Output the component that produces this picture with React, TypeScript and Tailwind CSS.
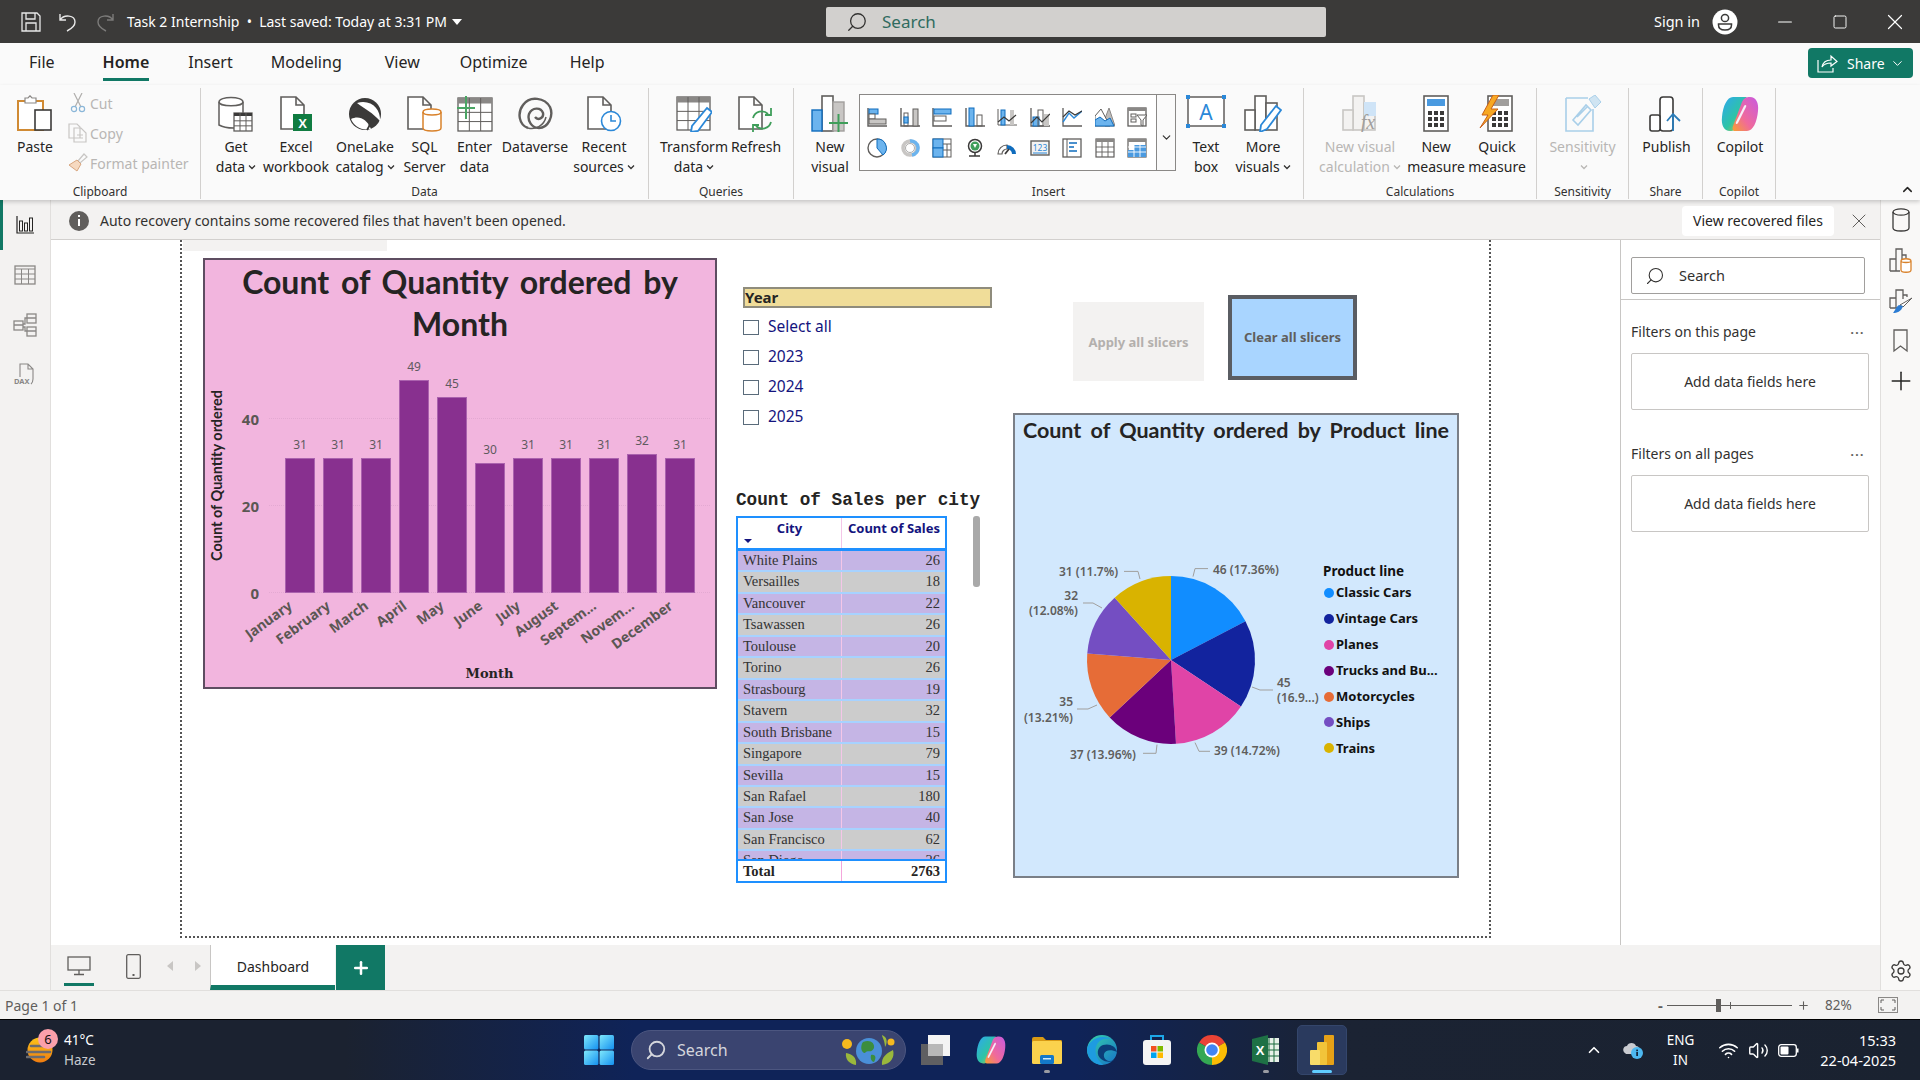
import type { ReactNode } from "react";
import { Minus, Square, X, Search, ChevronDown, ChevronUp, Settings, Plus, Wifi, Volume2 } from "lucide-react";

const GREY = "#605e5c";
const BLUE = "#6cb4ee";
const DARK_BLUE = "#0f6cbd";

function Ico({ w = 36, h = 37, children }: { w?: number; h?: number; children: ReactNode }) {
  return (
    <svg width={w} height={h} viewBox={`0 0 ${w} ${h}`} fill="none" className="shrink-0">
      {children}
    </svg>
  );
}

function Chev({ color = "#323130" }: { color?: string }) {
  return (
    <svg width="8" height="6" viewBox="0 0 8 6" fill="none" className="inline-block ml-[3px] mb-[1px]">
      <path d="M1 1.5 L4 4.5 L7 1.5" stroke={color} strokeWidth="1.3" />
    </svg>
  );
}

function Doc({ x = 0, color = GREY }: { x?: number; color?: string }) {
  return <path d={`M${x + 3} 2 H${x + 18} L${x + 26} 10 V34 H${x + 3} Z M${x + 18} 2 V10 H${x + 26}`} stroke={color} strokeWidth="1.6" fill="#fff" />;
}

function TableGrid({ x, y, w, h, head = "#8a8886", line = GREY }: { x: number; y: number; w: number; h: number; head?: string; line?: string }) {
  return (
    <g>
      <rect x={x} y={y} width={w} height={h} fill="#fff" stroke={line} strokeWidth="1.3" />
      <rect x={x} y={y} width={w} height={h / 6} fill={head} />
      <path d={`M${x + w / 3} ${y} V${y + h} M${x + (2 * w) / 3} ${y} V${y + h} M${x} ${y + h / 2.3} H${x + w} M${x} ${y + h / 1.4} H${x + w}`} stroke={line} strokeWidth="1" />
    </g>
  );
}

const PasteIcon = () => (
  <Ico w={36} h={37}>
    <rect x="1" y="6" width="25" height="29" fill="#fff" stroke="#d08a33" strokeWidth="2" />
    <path d="M8 6 V3 H11 L13 0.8 L15 3 H19 V8 H8 Z" fill="#fff" stroke="#8a8886" strokeWidth="1.2" />
    <rect x="18" y="15" width="16" height="20" fill="#fff" stroke="#3b3a39" strokeWidth="1.6" />
  </Ico>
);

const GetDataIcon = () => (
  <Ico>
    <path d="M1 7 C1 1 25 1 25 7 V30 C25 34 8 34 1 30 Z" fill="#fff" stroke={GREY} strokeWidth="1.5" />
    <path d="M1 7 C1 12 25 12 25 7" stroke={GREY} strokeWidth="1.5" />
    <TableGrid x={16} y={18} w={18} h={18} head="#3b3a39" line={GREY} />
  </Ico>
);

const ExcelIcon = () => (
  <Ico>
    <Doc />
    <rect x="15" y="19" width="19" height="17" fill="#107c41" />
    <text x="24.5" y="32.5" textAnchor="middle" fontSize="13" fontWeight="700" fill="#fff" fontFamily="Liberation Sans">X</text>
  </Ico>
);

const OneLakeIcon = () => (
  <Ico>
    <circle cx="18" cy="19" r="16" fill="#3b3a39" />
    <path d="M10 8 C24 4 34 14 33 26 C26 18 18 14 10 8 Z" fill="#fff" />
    <path d="M4 24 C12 20 20 24 24 34 C14 36 7 31 4 24 Z" fill="#fff" />
    <path d="M20 17 C24 24 24 30 20 35" stroke="#3b3a39" strokeWidth="2" />
  </Ico>
);

const SqlIcon = () => (
  <Ico>
    <Doc x={-2} />
    <path d="M16 17 C16 13 34 13 34 17 V33 C34 37 16 37 16 33 Z" fill="#fff" stroke="#d9822b" strokeWidth="1.5" />
    <path d="M16 17 C16 21 34 21 34 17" stroke="#d9822b" strokeWidth="1.5" />
  </Ico>
);

const EnterDataIcon = () => (
  <Ico>
    <TableGrid x={1} y={3} w={34} h={33} />
    <path d="M0 13 H18 M9 1 V24" stroke="#4aa564" strokeWidth="2" />
  </Ico>
);

const DataverseIcon = () => (
  <Ico>
    <path d="M11 33 C2 30 0 18 6 10 C13 0 28 3 33 12 C37 21 31 33 22 33 C15 33 10 26 12 19 C15 12 24 12 26 18 C27 23 21 26 18 22" stroke={GREY} strokeWidth="2.4" />
    <path d="M11 33 C18 35 27 31 29 22" stroke={GREY} strokeWidth="1.5" />
  </Ico>
);

const RecentIcon = () => (
  <Ico>
    <Doc x={-1} />
    <circle cx="25" cy="26" r="9.5" fill="#fff" stroke="#2b88d8" strokeWidth="1.6" />
    <path d="M25 20 V26 H30" stroke="#2b88d8" strokeWidth="1.6" />
  </Ico>
);

const TransformIcon = () => (
  <Ico>
    <TableGrid x={1} y={2} w={33} h={33} />
    <path d="M31 13 L36 17 L22 36 L15 37 L16 31 Z" fill="#fff" stroke="#2b88d8" strokeWidth="1.8" />
  </Ico>
);

const RefreshIcon = () => (
  <Ico>
    <Doc x={-2} />
    <path d="M15 24 A9 9 0 0 1 30 20 M33 14 V21 H27 M33 28 A9 9 0 0 1 18 32 M15 38 V31 H21" stroke="#3f9e5a" strokeWidth="1.8" transform="translate(0 -1)" />
  </Ico>
);

const Bars = ({ fill = "#fff", stroke = GREY }: { fill?: string; stroke?: string }) => (
  <g stroke={stroke} strokeWidth="1.6">
    <rect x="11" y="1" width="11" height="34" fill={fill} />
    <rect x="22" y="8" width="11" height="27" fill={fill} />
    <rect x="1" y="15" width="10" height="20" fill={fill} />
  </g>
);

const NewVisualIcon = () => (
  <Ico w={38}>
    <rect x="11" y="1" width="11" height="35" fill="#fff" stroke={GREY} strokeWidth="1.6" />
    <rect x="22" y="7" width="11" height="29" fill="#c8c6c4" stroke="#a19f9d" strokeWidth="1.4" />
    <rect x="1" y="15" width="10" height="21" fill={BLUE} stroke={DARK_BLUE} strokeWidth="1.4" />
    <path d="M18 28 H37 M27.5 19 V38" stroke="#3f9e5a" strokeWidth="2" />
  </Ico>
);

const TextBoxIcon = () => (
  <Ico w={40} h={33}>
    <rect x="2" y="2" width="36" height="29" stroke={GREY} strokeWidth="1.5" fill="#fff" />
    <rect x="0" y="0" width="4" height="4" fill="#2b88d8" />
    <rect x="36" y="0" width="4" height="4" fill="#2b88d8" />
    <rect x="0" y="29" width="4" height="4" fill="#2b88d8" />
    <rect x="36" y="29" width="4" height="4" fill="#2b88d8" />
    <text x="20" y="25" textAnchor="middle" fontSize="21" fill="#2b88d8" fontFamily="Noto Sans">A</text>
  </Ico>
);

const MoreVisualsIcon = () => (
  <Ico w={38}>
    <Bars />
    <path d="M32 11 L37 15 L23 34 L16 37 L17 30 Z" fill="#fff" stroke="#2b88d8" strokeWidth="1.8" />
  </Ico>
);

const VisualCalcIcon = () => (
  <Ico>
    <Bars stroke="#c8c6c4" fill="#f3f2f1" />
    <rect x="22" y="7" width="12" height="14" fill="#cfe4f7" />
    <text x="26" y="34" textAnchor="middle" fontSize="20" fontStyle="italic" fill="#a19f9d" fontFamily="Liberation Serif">fx</text>
  </Ico>
);

const Calc = ({ x = 0, blue = true }: { x?: number; blue?: boolean }) => (
  <g transform={`translate(${x} 0)`}>
    <rect x="1" y="1" width="24" height="35" fill="#fff" stroke={GREY} strokeWidth="1.6" />
    <rect x="4" y="4" width="18" height="7" fill={blue ? "#4a9ae0" : "#a19f9d"} />
    {[16, 22, 28].map((y) =>
      [5, 11, 17].map((cx) => <rect key={`${y}-${cx}`} x={cx} y={y} width="4" height="4" fill="#3b3a39" />)
    )}
  </g>
);

const QuickIcon = () => (
  <Ico>
    <Calc x={8} blue={false} />
    <path d="M14 0 L3 20 L9 20 L1 33 L19 14 L12 14 L20 0 Z" fill="#f7a823" stroke="#c8601a" strokeWidth="1" />
  </Ico>
);

const SensitivityIcon = () => (
  <Ico w={38} h={38}>
    <path d="M2 3 H24 M2 3 V36 H29 V14" stroke="#a9cfe9" strokeWidth="1.6" />
    <path d="M9 25 L22 10 L27 15 L14 30 Z M13 22 L24 11" stroke="#a9cfe9" strokeWidth="1.6" />
    <path d="M25 4 L31 0 L37 7 L31 13 Z" fill="#cfe4f2" stroke="#a9cfe9" />
  </Ico>
);

const PublishIcon = () => (
  <Ico>
    <rect x="11" y="2" width="13" height="34" rx="3" fill="#fff" stroke="#3b3a39" strokeWidth="1.6" />
    <rect x="1" y="20" width="10" height="16" rx="2" fill="#fff" stroke="#3b3a39" strokeWidth="1.6" />
    <path d="M24 36 V20 M18 26 L24 19 L31 26" stroke="#2b7cb8" strokeWidth="1.8" />
  </Ico>
);

function CopilotMark({ size = 38 }: { size?: number }) {
  return (
    <svg width={size} height={size} viewBox="0 0 38 38" fill="none" className="shrink-0">
      <defs>
        <linearGradient id="cpA" x1="0" y1="0" x2="1" y2="1">
          <stop offset="0" stopColor="#2ea7f0" />
          <stop offset="0.55" stopColor="#2ec4a5" />
          <stop offset="1" stopColor="#e8c020" />
        </linearGradient>
        <linearGradient id="cpB" x1="1" y1="0" x2="0" y2="1">
          <stop offset="0" stopColor="#c85ae0" />
          <stop offset="0.6" stopColor="#f06a9a" />
          <stop offset="1" stopColor="#f8a030" />
        </linearGradient>
      </defs>
      <path d="M12 2 H24 C26 2 27 4 26 7 L17 31 C15 35 13 36 9 36 C3 36 0 30 1 22 C2 11 6 2 12 2 Z" fill="url(#cpA)" />
      <path d="M26 36 H14 C12 36 11 34 12 31 L21 7 C23 3 25 2 29 2 C35 2 38 8 37 16 C36 27 32 36 26 36 Z" fill="url(#cpB)" />
      <path d="M23 11 L15 27 C14 29 16 30 17 28 L25 12 C26 10 24 9 23 11 Z" fill="#f6eef8" />
    </svg>
  );
}

type G = { k: string; n: ReactNode };
const gal = (p: ReactNode) => (
  <svg width="20" height="20" viewBox="0 0 20 20" fill="none">
    {p}
  </svg>
);
const L = GREY;

function TableGridSvg({ blue = false }: { blue?: boolean }) {
  return gal(
    <>
      <rect x="1" y="1" width="18" height="18" fill="#fff" stroke={L} strokeWidth="1.2" />
      <rect x="1" y="1" width="18" height="3" fill="#8a8886" />
      {blue && <rect x="7" y="7" width="12" height="12" fill="#4a9ae0" />}
      {blue && <rect x="1" y="12" width="18" height="7" fill="#4a9ae0" />}
      <path d="M7 4 V19 M13 4 V19 M1 9 H19 M1 14 H19" stroke={blue ? "#fff" : L} strokeWidth="0.9" />
    </>
  );
}

const galleryRow1: G[] = [
  { k: "a", n: gal(<><path d="M1 1 V19 H20" stroke={L} strokeWidth="1.4" /><rect x="2" y="2" width="9" height="5" fill={BLUE} stroke={DARK_BLUE} /><rect x="2" y="7" width="6" height="5" fill="#fff" stroke={L} /><rect x="2" y="12" width="17" height="5" fill="#c8c6c4" stroke={L} /></>) },
  { k: "b", n: gal(<><path d="M1 1 V19 H20" stroke={L} strokeWidth="1.4" /><rect x="4" y="6" width="4" height="13" stroke={L} /><rect x="4" y="10" width="4" height="6" fill={BLUE} stroke={DARK_BLUE} /><rect x="13" y="2" width="5" height="17" fill="#c8c6c4" stroke={L} /></>) },
  { k: "c", n: gal(<><path d="M1 1 V19 H20" stroke={L} strokeWidth="1.4" /><rect x="2" y="2" width="17" height="5" fill={BLUE} stroke={DARK_BLUE} /><rect x="2" y="9" width="12" height="5" stroke={L} /></>) },
  { k: "d", n: gal(<><path d="M1 1 V19 H20" stroke={L} strokeWidth="1.4" /><rect x="4" y="1" width="5" height="18" fill={BLUE} stroke={DARK_BLUE} /><rect x="12" y="8" width="5" height="11" stroke={L} /></>) },
  { k: "e", n: gal(<><path d="M1 2 V18 H20" stroke={L} /><rect x="4" y="3" width="4" height="15" fill={BLUE} stroke={DARK_BLUE} /><rect x="13" y="3" width="4" height="15" fill="#c8c6c4" /><path d="M1 15 L7 10 L12 14 L19 8" stroke="#3b3a39" strokeWidth="1.2" /></>) },
  { k: "f", n: gal(<><path d="M1 1 V19 H20" stroke={L} strokeWidth="1.3" /><rect x="3" y="10" width="6" height="9" fill={BLUE} stroke={DARK_BLUE} /><rect x="8" y="3" width="5" height="16" stroke={L} /><rect x="14" y="7" width="5" height="12" fill="#c8c6c4" /><path d="M1 16 L7 10 L12 15 L20 7" stroke="#3b3a39" strokeWidth="1.2" /></>) },
  { k: "g", n: gal(<><path d="M1 1 V19 H20" stroke={L} strokeWidth="1.3" /><path d="M1 15 L7 6 L12 11 L20 4" stroke="#2b88d8" strokeWidth="1.4" /><path d="M1 10 L7 4 L13 8 L20 4" stroke="#3b3a39" strokeWidth="1.2" /></>) },
  { k: "h", n: gal(<><path d="M9 14 L14 1 L20 19 H10 Z" fill="#bdbbb9" stroke="#8a8886" /><path d="M0 9 L6 2 L15 19 H0 Z" fill="#fff" stroke={L} /><path d="M0 13 L5 10 L10 14 L15 11 L19 19 H0 Z" fill={BLUE} stroke={DARK_BLUE} /></>) },
  { k: "i", n: gal(<><rect x="1" y="1" width="18" height="18" fill="#fff" stroke={L} strokeWidth="1.3" /><rect x="1" y="1" width="18" height="3" fill="#8a8886" /><rect x="4" y="7" width="5" height="3" stroke={L} /><rect x="4" y="12" width="5" height="3" stroke={L} /><path d="M10 8 H20 L16 13 V19 L14 18 V13 Z" fill="#fff" stroke={L} /></>) },
];
const galleryRow2: G[] = [
  { k: "j", n: gal(<><circle cx="10" cy="10" r="9" fill="#fff" stroke={L} strokeWidth="1.4" /><path d="M10 1 A9 9 0 0 1 16 17 L10 10 Z" fill={BLUE} stroke={DARK_BLUE} /></>) },
  { k: "k", n: gal(<><circle cx="10" cy="10" r="7" stroke="#c8c6c4" strokeWidth="3.5" /><path d="M10 3 A7 7 0 0 1 12 17" stroke={BLUE} strokeWidth="3.5" /><circle cx="10" cy="10" r="4.5" stroke="#8a8886" strokeWidth="0.7" /></>) },
  { k: "l", n: gal(<><rect x="1" y="1" width="18" height="18" fill="#fff" stroke={L} /><rect x="1" y="1" width="10" height="9" fill={BLUE} stroke={DARK_BLUE} /><rect x="1" y="10" width="10" height="9" fill={BLUE} stroke={DARK_BLUE} /><path d="M11 6 H19 M15 6 V19 M11 12 H19" stroke={L} /></>) },
  { k: "m", n: gal(<><circle cx="10" cy="8" r="6.5" fill="#fff" stroke="#3b3a39" strokeWidth="1.5" /><circle cx="10" cy="8" r="4.5" fill="#3f9e5a" /><path d="M8 6 L12 6 L10 10 Z" fill="#fff" /><path d="M4 18 H15 M10 14 V18" stroke="#3b3a39" strokeWidth="1.5" /></>) },
  { k: "n", n: gal(<><path d="M1 16 A9 9 0 0 1 10 7 L10 11 A5 5 0 0 0 5 16 Z" stroke={L} strokeWidth="1.2" fill="#fff" /><path d="M10 7 A9 9 0 0 1 19 16 H15 A5 5 0 0 0 10 11 Z" fill={DARK_BLUE} /><path d="M8 16 L12 11" stroke="#3b3a39" strokeWidth="1.8" /></>) },
  { k: "o", n: gal(<><rect x="1" y="3" width="18" height="14" fill="#f3f2f1" stroke={L} strokeWidth="1.4" /><text x="10" y="13" textAnchor="middle" fontSize="8.5" fill="#2b88d8" fontFamily="Noto Sans">123</text><path d="M3 15 H17" stroke="#2b88d8" /></>) },
  { k: "p", n: gal(<><rect x="1" y="1" width="18" height="18" fill="#fff" stroke={L} strokeWidth="1.3" /><path d="M5 1 V19" stroke={L} /><path d="M7 5 H15 M7 9 H12 M7 13 H15" stroke={DARK_BLUE} strokeWidth="1.6" /></>) },
  { k: "q", n: <TableGridSvg /> },
  { k: "r", n: <TableGridSvg blue /> },
];

function RibbonBtn({ icon, lines, w, chev = false, disabled = false, chevLine = false }: { icon: ReactNode; lines: string[]; w: number; chev?: boolean; disabled?: boolean; chevLine?: boolean }) {
  const color = disabled ? "text-[#b8b6b4]" : "text-[#252423]";
  return (
    <div style={{ width: w }} className="flex flex-col items-center shrink-0">
      <div className="h-[37px] flex items-start justify-center">{icon}</div>
      <div className={`mt-[5px] text-[14px] leading-[20px] text-center whitespace-nowrap ${color}`}>
        {lines.map((l, i) => (
          <div key={l} className="flex items-center justify-center h-[20px]">
            {l}
            {chev && i === lines.length - 1 && <Chev color={disabled ? "#b8b6b4" : "#323130"} />}
          </div>
        ))}
        {chevLine && (
          <div className="flex items-center justify-center h-[20px]">
            <Chev color="#b8b6b4" />
          </div>
        )}
      </div>
    </div>
  );
}

function Group({ w, pl = 0, label, children, last = false }: { w: number; pl?: number; label: string; children: ReactNode; last?: boolean }) {
  return (
    <div style={{ width: w }} className={`shrink-0 flex flex-col h-[111px] ${last ? "" : "border-r border-[#d2d0ce]"}`}>
      <div style={{ paddingLeft: pl }} className="flex flex-1 pt-[7px]">
        {children}
      </div>
      <div className="h-[14px] leading-[14px] text-[12px] text-[#323130] text-center">{label}</div>
    </div>
  );
}

function TitleBar() {
  return (
    <div className="h-[43px] bg-[#3b3a39] flex items-center text-white shrink-0">
      <svg width="20" height="20" viewBox="0 0 20 20" fill="none" className="ml-[21px]">
        <path d="M1 1 H16 L19 4 V19 H1 Z" stroke="#e8e8e8" strokeWidth="1.3" />
        <path d="M5 1 V7 H14 V1 M5 19 V11 H15 V19" stroke="#e8e8e8" strokeWidth="1.3" />
      </svg>
      <svg width="18" height="20" viewBox="0 0 18 20" fill="none" className="ml-[18px]">
        <path d="M1 2 V8 H7 M1 8 C5 2 16 3 16 10 C16 14 12 17 8 19" stroke="#e8e8e8" strokeWidth="1.4" />
      </svg>
      <svg width="18" height="20" viewBox="0 0 18 20" fill="none" className="ml-[19px]">
        <path d="M17 2 V8 H11 M17 8 C13 2 2 3 2 10 C2 14 6 17 10 19" stroke="#7c7b7a" strokeWidth="1.4" />
      </svg>
      <div className="ml-[13px] text-[14px] whitespace-nowrap w-[315px]">Task 2 Internship&nbsp; •&nbsp; Last saved: Today at 3:31 PM</div>
      <div className="ml-[10px] w-0 h-0 border-x-[5px] border-x-transparent border-t-[6px] border-t-white" />
      <div className="ml-[364px] w-[500px] h-[30px] bg-[#d2d0ce] rounded-[2px] flex items-center pl-[20px]">
        <Search size={22} strokeWidth={1.4} className="text-[#323130] -scale-x-100" />
        <span className="ml-[14px] text-[17px] text-[#2f6b5f]">Search</span>
      </div>
      <div className="ml-[328px] text-[14.5px] w-[46px] whitespace-nowrap">Sign in</div>
      <svg width="26" height="26" viewBox="0 0 26 26" className="ml-[12px]">
        <circle cx="13" cy="13" r="12.5" fill="#fff" />
        <circle cx="13" cy="9" r="3.6" fill="none" stroke="#3b3a39" strokeWidth="1.5" />
        <path d="M6.5 15 H19.5 V16 C19.5 20 16 21 13 21 C10 21 6.5 20 6.5 16 Z" fill="none" stroke="#3b3a39" strokeWidth="1.5" />
      </svg>
      <Minus size={22} strokeWidth={1.1} className="ml-[36px]" />
      <Square size={16} strokeWidth={1.4} className="ml-[36px]" />
      <X size={26} strokeWidth={1.1} className="ml-[34px]" />
    </div>
  );
}

function Tabs() {
  const tabs = [
    { t: "File", ml: 29 },
    { t: "Home", ml: 48, on: true },
    { t: "Insert", ml: 39 },
    { t: "Modeling", ml: 38 },
    { t: "View", ml: 43 },
    { t: "Optimize", ml: 40 },
    { t: "Help", ml: 42 },
  ];
  return (
    <div className="h-[42px] bg-[#fafafa] flex items-start shrink-0">
      {tabs.map((t) => (
        <div key={t.t} style={{ marginLeft: t.ml }} className="relative h-[38px] flex items-center">
          <span className={`text-[16px] text-[#252423] ${t.on ? "font-semibold" : ""}`}>{t.t}</span>
          {t.on && <div className="absolute left-0 right-0 top-[35px] h-[3px] bg-[#117865]" />}
        </div>
      ))}
      <div className="ml-auto mr-[7px] mt-[5px] w-[105px] h-[30px] rounded-[4px] bg-[#117865] text-white flex items-center pl-[9px] text-[14px]">
        <svg width="21" height="20" viewBox="0 0 21 20" fill="none" className="shrink-0">
          <path d="M1 7 V19 H16 V15" stroke="#fff" strokeWidth="1.2" />
          <path d="M5 14 C6 9 10 7 14 7 V3 L20 8.5 L14 13 V10 C10 10 7 11 5 14 Z" stroke="#fff" strokeWidth="1.2" />
        </svg>
        <span className="ml-[9px]">Share</span>
        <ChevronDown size={15} strokeWidth={1.6} className="ml-[5px]" />
      </div>
    </div>
  );
}

function SmallAction({ icon, label }: { icon: ReactNode; label: string }) {
  return (
    <div className="h-[30px] flex items-center text-[14px] text-[#b8b6b4] whitespace-nowrap">
      <div className="w-[25px] flex justify-center">{icon}</div>
      {label}
    </div>
  );
}

function Ribbon() {
  return (
    <div className="h-[115px] bg-[#fafafa] flex pt-[3px] shadow-[0_2px_4px_rgba(0,0,0,0.18)] relative z-10 shrink-0">
      <Group w={201} label="Clipboard">
        <div className="ml-[15px] w-[40px]">
          <RibbonBtn w={40} icon={<PasteIcon />} lines={["Paste"]} />
        </div>
        <div className="ml-[10px] -mt-[7px]">
          <SmallAction
            label="Cut"
            icon={
              <svg width="16" height="20" viewBox="0 0 16 20" fill="none">
                <path d="M4 0 L11 14 M12 0 L5 14" stroke="#b0aeac" strokeWidth="1.2" />
                <circle cx="4" cy="16" r="2.6" stroke="#8ab6d8" strokeWidth="1.2" />
                <circle cx="12" cy="16" r="2.6" stroke="#8ab6d8" strokeWidth="1.2" />
              </svg>
            }
          />
          <SmallAction
            label="Copy"
            icon={
              <svg width="20" height="20" viewBox="0 0 20 20" fill="none">
                <path d="M1 1 H9 L12 4 V15 H1 Z M6 5 H13 L18 10 V19 H6 Z M9 12 H15 M9 15 H15" stroke="#c8c6c4" strokeWidth="1.2" fill="#fafafa" />
              </svg>
            }
          />
          <SmallAction
            label="Format painter"
            icon={
              <svg width="20" height="20" viewBox="0 0 20 20" fill="none">
                <path d="M10 8 L16 1 L19 4 L12 10 Z" stroke="#c8c6c4" strokeWidth="1.2" />
                <path d="M9 7 L13 11 L9 18 L1 12 Z" fill="#f6d9c0" stroke="#d8a67f" strokeWidth="1" />
              </svg>
            }
          />
        </div>
      </Group>
      <Group w={448} pl={9} label="Data">
        <RibbonBtn w={52} icon={<GetDataIcon />} lines={["Get", "data"]} chev />
        <RibbonBtn w={68} icon={<ExcelIcon />} lines={["Excel", "workbook"]} />
        <RibbonBtn w={70} icon={<OneLakeIcon />} lines={["OneLake", "catalog"]} chev />
        <RibbonBtn w={49} icon={<SqlIcon />} lines={["SQL", "Server"]} />
        <RibbonBtn w={51} icon={<EnterDataIcon />} lines={["Enter", "data"]} />
        <RibbonBtn w={70} icon={<DataverseIcon />} lines={["Dataverse"]} />
        <RibbonBtn w={68} icon={<RecentIcon />} lines={["Recent", "sources"]} chev />
      </Group>
      <Group w={145} pl={5} label="Queries">
        <RibbonBtn w={80} icon={<TransformIcon />} lines={["Transform", "data"]} chev />
        <RibbonBtn w={44} icon={<RefreshIcon />} lines={["Refresh"]} />
      </Group>
      <Group w={510} pl={11} label="Insert">
        <RibbonBtn w={50} icon={<NewVisualIcon />} lines={["New", "visual"]} />
        <div className="ml-[4px] -mt-[1px] w-[317px] h-[77px] border border-[#8a8886] bg-white flex">
          <div className="w-[296px] flex flex-col justify-around py-[7px] pl-[7px]">
            {[galleryRow1, galleryRow2].map((row, i) => (
              <div key={i} className="flex gap-[12.5px]">
                {row.map((g) => (
                  <div key={g.k} className="w-[20px] h-[20px]">{g.n}</div>
                ))}
              </div>
            ))}
          </div>
          <div className="flex-1 border-l border-[#8a8886] bg-[#fafafa] flex items-center justify-center pt-[10px]">
            <ChevronDown size={13} strokeWidth={2.2} className="text-[#323130]" />
          </div>
        </div>
        <RibbonBtn w={60} icon={<TextBoxIcon />} lines={["Text", "box"]} />
        <RibbonBtn w={54} icon={<MoreVisualsIcon />} lines={["More", "visuals"]} chev />
      </Group>
      <Group w={233} pl={6} label="Calculations">
        <RibbonBtn w={100} icon={<VisualCalcIcon />} lines={["New visual", "calculation"]} chev disabled />
        <RibbonBtn w={52} icon={<Ico w={26}><Calc /></Ico>} lines={["New", "measure"]} />
        <RibbonBtn w={70} icon={<QuickIcon />} lines={["Quick", "measure"]} />
      </Group>
      <Group w={92} label="Sensitivity">
        <RibbonBtn w={91} icon={<SensitivityIcon />} lines={["Sensitivity"]} disabled chevLine />
      </Group>
      <Group w={74} label="Share">
        <RibbonBtn w={75} icon={<PublishIcon />} lines={["Publish"]} />
      </Group>
      <Group w={73} label="Copilot">
        <RibbonBtn w={74} icon={<CopilotMark />} lines={["Copilot"]} />
      </Group>
      <div className="flex-1 flex items-end justify-end pr-[5px] pb-[3px]">
        <ChevronUp size={15} strokeWidth={2.4} className="text-[#252423]" />
      </div>
    </div>
  );
}

function LeftRail() {
  return (
    <div className="w-[51px] bg-[#f3f2f1] border-r border-[#e1dfdd] shrink-0 flex flex-col">
      <div className="h-[50px] relative flex items-center justify-center">
        <div className="absolute left-0 top-0 bottom-0 w-[3px] bg-[#117865]" />
        <svg width="18" height="18" viewBox="0 0 18 18" fill="none">
          <path d="M1 0 V17 H18" stroke="#252423" strokeWidth="1.2" />
          <rect x="3.5" y="5" width="3" height="10" stroke="#252423" />
          <rect x="8.5" y="7" width="3" height="8" stroke="#252423" />
          <rect x="13.5" y="2" width="3" height="13" stroke="#252423" />
        </svg>
      </div>
      <div className="h-[50px] flex items-center justify-center">
        <svg width="22" height="20" viewBox="0 0 22 20" fill="none">
          <rect x="1" y="1" width="20" height="18" stroke="#8a8886" strokeWidth="1.3" />
          <path d="M1 4 H21 M1 9 H21 M1 14 H21 M7.5 4 V19 M14.5 4 V19" stroke="#8a8886" />
        </svg>
      </div>
      <div className="h-[50px] flex items-center justify-center">
        <svg width="24" height="24" viewBox="0 0 24 24" fill="none" stroke="#8a8886" strokeWidth="1.3">
          <rect x="1" y="8" width="9" height="9" />
          <rect x="14" y="1" width="9" height="9" />
          <rect x="14" y="14" width="9" height="9" />
          <path d="M1 12 H10 M14 5 H23 M14 18 H23 M10 11 H12 V5 H14 M10 14 H12 V18 H14" />
        </svg>
      </div>
      <div className="h-[50px] flex items-center justify-center">
        <svg width="24" height="24" viewBox="0 0 24 24" fill="none">
          <path d="M7 14 V1 H15 L20 6 V16 C20 19 19 20 18 21 M15 1 V6 H20" stroke="#8a8886" strokeWidth="1.1" />
          <text x="1" y="21" fontSize="7.5" fontWeight="700" fill="#8a8886" fontFamily="Noto Sans">DAX</text>
        </svg>
      </div>
    </div>
  );
}

const MONTHS = [
  { m: "January", v: 31 },
  { m: "February", v: 31 },
  { m: "March", v: 31 },
  { m: "April", v: 49 },
  { m: "May", v: 45 },
  { m: "June", v: 30 },
  { m: "July", v: 31 },
  { m: "August", v: 31 },
  { m: "Septem...", v: 31 },
  { m: "Novem...", v: 32 },
  { m: "December", v: 31 },
];

const UNIT = 4.35;

function BarChart() {
  return (
    <div className="w-[514px] h-[431px] bg-[#f2b5de] border-2 border-[#5e4d61] flex flex-col font-['Lato',sans-serif]">
      <div className="text-center text-[32px] font-bold leading-[42px] text-[#252423] pt-px [word-spacing:4px]">
        Count of Quantity ordered by
        <br />
        Month
      </div>
      <div className="flex h-[248px]">
        <div className="w-[24px] flex items-center justify-center pt-[12px]">
          <span className="[writing-mode:vertical-rl] rotate-180 text-[14.5px] font-bold text-[#252423] whitespace-nowrap">Count of Quantity ordered</span>
        </div>
        <div className="w-[30px] relative font-['Noto_Sans',sans-serif] text-[15px] font-bold text-[#5b5753] leading-[20px]">
          {[40, 20, 0].map((v) => (
            <span key={v} style={{ bottom: v * UNIT - 10 }} className="absolute right-0">
              {v}
            </span>
          ))}
        </div>
        <div className="relative ml-[10px] w-[441px] flex items-end pl-[16px] gap-[8px]">
          {[40, 20, 0].map((v) => (
            <div key={v} style={{ bottom: v * UNIT }} className="absolute left-0 right-0 border-t border-dotted border-[#e3a9d2]" />
          ))}
          {MONTHS.map((d) => (
            <div key={d.m} className="relative w-[30px] flex flex-col items-center font-['Noto_Sans',sans-serif]">
              <span className="text-[12px] leading-[16px] text-[#5f5a5e] mb-[5px]">{d.v}</span>
              <div style={{ height: d.v * UNIT }} className="w-[30px] bg-[#88308f] border border-[#ab62ae]" />
            </div>
          ))}
        </div>
      </div>
      <div className="flex ml-[64px] pl-[16px] gap-[8px] h-[60px] font-['Noto_Sans',sans-serif]">
        {MONTHS.map((d) => (
          <div key={d.m} className="relative w-[30px]">
            <span className="absolute right-[31px] top-[2px] origin-top-right -rotate-[36deg] text-[14px] font-bold text-[#5b5753] whitespace-nowrap">{d.m}</span>
          </div>
        ))}
      </div>
      <div className="ml-[64px] w-[441px] text-center font-['DejaVu_Serif',serif] font-bold text-[13px] text-[#252423] leading-[18px] mt-[12px]">Month</div>
    </div>
  );
}

const CITIES: [string, number][] = [
  ["White Plains", 26],
  ["Versailles", 18],
  ["Vancouver", 22],
  ["Tsawassen", 26],
  ["Toulouse", 20],
  ["Torino", 26],
  ["Strasbourg", 19],
  ["Stavern", 32],
  ["South Brisbane", 15],
  ["Singapore", 79],
  ["Sevilla", 15],
  ["San Rafael", 180],
  ["San Jose", 40],
  ["San Francisco", 62],
  ["San Diego", 26],
];

function Slicer() {
  return (
    <div className="ml-[7px] w-[249px]">
      <div className="h-[21px] bg-[#f0dd99] border-2 border-[#8f8c7c] flex items-center text-[15px] font-bold text-[#252423] leading-none">Year</div>
      <div className="mt-[4px]">
        {["Select all", "2023", "2024", "2025"].map((y) => (
          <div key={y} className="h-[30px] flex items-center">
            <div className="w-[16px] h-[15px] bg-white border border-[#5a6b7a]" />
            <span className="ml-[9px] text-[15.5px] text-[#14147e]">{y}</span>
          </div>
        ))}
      </div>
    </div>
  );
}

function CityTable() {
  return (
    <div className="flex mt-[6px]">
      <div className="w-[211px] h-[367px] border-2 border-[#1e90ff] flex flex-col bg-white shrink-0">
        <div className="h-[33px] border-b-[3px] border-[#1e90ff] flex shrink-0 text-[13px] font-bold text-[#14147e] font-['Noto_Sans',sans-serif]">
          <div className="relative w-[104px] border-r border-[#f4c6e8] text-center leading-[20px]">
            City
            <div className="absolute left-[6px] top-[21px] w-0 h-0 border-x-[4px] border-x-transparent border-t-[4px] border-t-[#14147e]" />
          </div>
          <div className="flex-1 text-right pr-[5px] leading-[20px] whitespace-nowrap">Count of Sales</div>
        </div>
        <div className="flex-1 overflow-hidden font-['Liberation_Serif',serif] text-[14.5px] text-[#333]">
          {CITIES.map(([c, n], i) => (
            <div key={c} className={`h-[21.46px] flex border-b-2 border-[#a7d2ff] leading-[19px] ${i % 2 ? "bg-[#cccccc]" : "bg-[#c5b5e5]"}`}>
              <div className="w-[104px] pl-[5px] border-r border-[#f4c6e8]">{c}</div>
              <div className="flex-1 text-right pr-[5px]">{n}</div>
            </div>
          ))}
        </div>
        <div className="h-[22px] border-t-2 border-[#1e90ff] flex shrink-0 font-['Liberation_Serif',serif] text-[14.5px] font-bold text-[#252423] leading-[21px]">
          <div className="w-[104px] pl-[5px] border-r border-[#f4a6dc]">Total</div>
          <div className="flex-1 text-right pr-[5px]">2763</div>
        </div>
      </div>
      <div className="ml-[26px] w-[7px] h-[71px] rounded-[3px] bg-[#a9a9a9]" />
    </div>
  );
}

const PIE = [
  { n: "Classic Cars", v: 17.36, c: "#118dff" },
  { n: "Vintage Cars", v: 16.98, c: "#12239e" },
  { n: "Planes", v: 14.72, c: "#e044a7" },
  { n: "Trucks and Bu...", v: 13.96, c: "#6b007b" },
  { n: "Motorcycles", v: 13.21, c: "#e66c37" },
  { n: "Ships", v: 12.08, c: "#744ec2" },
  { n: "Trains", v: 11.7, c: "#d9b300" },
];

function pieSlices(cx: number, cy: number, r: number) {
  let a = 0;
  const total = PIE.reduce((s, p) => s + p.v, 0);
  return PIE.map((p) => {
    const start = a;
    a += (p.v / total) * 2 * Math.PI;
    const x1 = cx + r * Math.sin(start);
    const y1 = cy - r * Math.cos(start);
    const x2 = cx + r * Math.sin(a);
    const y2 = cy - r * Math.cos(a);
    return { c: p.c, d: `M${cx} ${cy} L${x1} ${y1} A${r} ${r} 0 0 1 ${x2} ${y2} Z` };
  });
}

const LEADERS = [
  "M1193 576.6 L1195 568.6 H1208",
  "M1252 687 L1260 690 H1273",
  "M1195 742.6 L1199 751.3 H1210",
  "M1157 744.6 L1156 753.3 H1143",
  "M1097 705 L1088 709 H1077",
  "M1102 608 L1093 603 H1083",
  "M1140 579 L1138 571.4 H1124",
];

const PIE_LABELS: { x: number; y: number; t: string; a?: "end" }[] = [
  { x: 1213, y: 574, t: "46 (17.36%)" },
  { x: 1277, y: 687, t: "45" },
  { x: 1277, y: 702, t: "(16.9...)" },
  { x: 1214, y: 755, t: "39 (14.72%)" },
  { x: 1070, y: 759, t: "37 (13.96%)" },
  { x: 1073, y: 706, t: "35", a: "end" },
  { x: 1073, y: 722, t: "(13.21%)", a: "end" },
  { x: 1078, y: 600, t: "32", a: "end" },
  { x: 1078, y: 615, t: "(12.08%)", a: "end" },
  { x: 1059, y: 576, t: "31 (11.7%)" },
];

function PieChart() {
  return (
    <div className="w-[446px] h-[465px] bg-[#d2e8fd] border-2 border-[#7a7f87] flex flex-col">
      <div className="h-[30px] text-center text-[21.5px] font-bold font-['Lato',sans-serif] text-[#252423] leading-[30px] whitespace-nowrap [word-spacing:4px]">
        Count of Quantity ordered by Product line
      </div>
      <div className="flex flex-1">
        <svg width="308" height="431" viewBox="1015 445 308 431" fill="none" className="shrink-0">
          {pieSlices(1171, 660, 84).map((s) => (
            <path key={s.c} d={s.d} fill={s.c} />
          ))}
          {LEADERS.map((d) => (
            <path key={d} d={d} stroke="#a19f9d" strokeWidth="1" />
          ))}
          {PIE_LABELS.map((l) => (
            <text key={l.t} x={l.x} y={l.y} textAnchor={l.a ?? "start"} fontSize="12" fontWeight="600" fill="#605e5c" fontFamily="Noto Sans">
              {l.t}
            </text>
          ))}
        </svg>
        <div className="pt-[116px] font-['Noto_Sans',sans-serif]">
          <div className="text-[13.5px] font-bold text-[#111] leading-[20px]">Product line</div>
          <div className="-mt-[1px]">
            {PIE.map((p) => (
              <div key={p.n} className="h-[25.9px] flex items-center">
                <div style={{ backgroundColor: p.c }} className="ml-[1px] w-[10px] h-[10px] rounded-full" />
                <span className="ml-[2px] text-[13px] font-bold text-[#111] whitespace-nowrap">{p.n}</span>
              </div>
            ))}
          </div>
        </div>
      </div>
    </div>
  );
}

function ReportPage() {
  return (
    <div className="ml-[129px] w-[1311px] h-[698px] border-x-2 border-b-2 border-dotted border-[#555] flex flex-col shrink-0">
      <div className="h-[11px] w-[204px] bg-[#f3f2f1] ml-px shrink-0" />
      <div className="flex">
        <div className="ml-[21px] mt-[7px]">
          <BarChart />
        </div>
        <div className="ml-[19px] w-[260px] mt-[36px]">
          <Slicer />
          <div className="mt-[58px] h-[20px] leading-[20px] font-['Liberation_Mono',monospace] font-bold text-[17.7px] text-[#252423] whitespace-nowrap">Count of Sales per city</div>
          <CityTable />
        </div>
        <div className="ml-[17px] mt-[44px]">
          <div className="flex items-start ml-[60px] h-[118px]">
            <div className="w-[131px] h-[79px] mt-[7px] pt-[2px] bg-[#f3f2f1] flex items-center justify-center text-[13px] font-bold text-[#b3b0ad]">Apply all slicers</div>
            <div className="ml-[24px] w-[129px] h-[85px] bg-[#a9d5ff] border-[4px] border-[#5a5d63] flex items-center justify-center text-[13px] font-bold text-[#605e5c]">Clear all slicers</div>
          </div>
          <PieChart />
        </div>
      </div>
    </div>
  );
}

function FilterSection({ title, mt }: { title: string; mt: string }) {
  return (
    <div className={mt}>
      <div className="flex items-center justify-between w-[234px] h-[20px]">
        <span className="text-[14px] text-[#323130]">{title}</span>
        <span className="text-[12px] tracking-[1.5px] font-bold text-[#605e5c] leading-none pb-[3px]">...</span>
      </div>
      <div className="mt-[12px] w-[238px] h-[57px] bg-white border border-[#c8c6c4] rounded-[2px] flex items-center justify-center text-[14px] text-[#323130]">Add data fields here</div>
    </div>
  );
}

function FilterPane() {
  return (
    <div className="w-[260px] shrink-0 border-l border-[#c8c6c4] bg-white flex flex-col">
      <div className="h-[60px] border-b border-[#c8c6c4] pt-[17px] pl-[10px]">
        <div className="w-[234px] h-[37px] border border-[#a19f9d] rounded-[2px] flex items-center pl-[13px]">
          <Search size={20} strokeWidth={1.3} className="text-[#323130] -scale-x-100" />
          <span className="ml-[14px] text-[14.5px] text-[#323130]">Search</span>
        </div>
      </div>
      <div className="pl-[10px]">
        <FilterSection title="Filters on this page" mt="mt-[21px]" />
        <FilterSection title="Filters on all pages" mt="mt-[33px]" />
      </div>
    </div>
  );
}

function RightRail() {
  return (
    <div className="w-[40px] bg-[#f9f8f7] border-l border-[#e1dfdd] shrink-0 flex flex-col items-center">
      <div className="h-[40px] flex items-center">
        <svg width="18" height="24" viewBox="0 0 18 24" fill="none">
          <ellipse cx="9" cy="4" rx="8" ry="3.2" stroke="#3b3a39" strokeWidth="1.3" />
          <path d="M1 4 V20 C1 24 17 24 17 20 V4" stroke="#3b3a39" strokeWidth="1.3" />
        </svg>
      </div>
      <div className="h-[41px] flex items-center">
        <svg width="23" height="25" viewBox="0 0 23 25" fill="none">
          <path d="M1 23 V11 H7 M7 23 V1 H13 V12 M13 7 H17 V10 M1 23 H11" stroke="#605e5c" strokeWidth="1.3" />
          <path d="M12 13 C12 10 22 10 22 13 V22 C22 25 12 25 12 22 Z M12 13 C12 15 22 15 22 13" stroke="#d9822b" strokeWidth="1.3" fill="#fff" />
        </svg>
      </div>
      <div className="h-[40px] flex items-center">
        <svg width="24" height="25" viewBox="0 0 24 25" fill="none">
          <path d="M1 19 V9 H7 M7 19 V1 H14 V10 M14 6 H18 V8 M1 19 H8" stroke="#605e5c" strokeWidth="1.3" />
          <path d="M23 9 L14 18 L11 16 Z" fill="#fff" stroke="#605e5c" />
          <path d="M14 17 C12 23 8 24 4 24 C6 22 6 19 10 16 Z" fill="#2b7cd3" />
        </svg>
      </div>
      <div className="h-[40px] flex items-center">
        <svg width="15" height="24" viewBox="0 0 15 24" fill="none">
          <path d="M1 1 H14 V22 L7.5 17 L1 22 Z" stroke="#605e5c" strokeWidth="1.3" />
        </svg>
      </div>
      <div className="h-[40px] flex items-center">
        <Plus size={30} strokeWidth={1.2} className="text-[#252423]" />
      </div>
      <div className="mt-auto mb-[7px]">
        <Settings size={24} strokeWidth={1.3} className="text-[#3b3a39]" />
      </div>
    </div>
  );
}

function PageTabs() {
  return (
    <div className="h-[45px] bg-[#f3f2f1] flex items-stretch shrink-0">
      <div className="ml-[13px] w-[30px] relative flex items-center justify-center pb-[3px]">
        <svg width="24" height="20" viewBox="0 0 24 20" fill="none">
          <rect x="1" y="1" width="22" height="13" stroke="#605e5c" strokeWidth="1.3" />
          <path d="M12 14 V18 M7 18.5 H17" stroke="#605e5c" strokeWidth="1.3" />
        </svg>
        <div className="absolute left-0 right-0 bottom-[4px] h-[3px] bg-[#117865]" />
      </div>
      <div className="ml-[32px] w-[15px] flex items-center pb-[3px]">
        <svg width="15" height="25" viewBox="0 0 15 25" fill="none">
          <rect x="0.7" y="0.7" width="13.6" height="23.6" rx="1.5" stroke="#605e5c" strokeWidth="1.3" />
          <rect x="6.5" y="20" width="2" height="2" fill="#605e5c" />
        </svg>
      </div>
      <div className="ml-[26px] flex items-center pb-[3px]">
        <div className="w-0 h-0 border-y-[5px] border-y-transparent border-r-[6px] border-r-[#c8c6c4]" />
      </div>
      <div className="ml-[22px] flex items-center pb-[3px]">
        <div className="w-0 h-0 border-y-[5px] border-y-transparent border-l-[6px] border-l-[#c8c6c4]" />
      </div>
      <div className="ml-[9px] w-[125px] pt-[3px] bg-white border-l border-[#c8c6c4] border-b-[5px] border-b-[#117865] flex items-center justify-center text-[14px] text-[#252423]">Dashboard</div>
      <div className="ml-px w-[49px] bg-[#117865] flex items-center justify-center text-white">
        <Plus size={20} strokeWidth={3} />
      </div>
    </div>
  );
}

function StatusBar() {
  return (
    <div className="h-[29px] bg-[#f3f2f1] border-t border-[#e1dfdd] flex items-center shrink-0 text-[#605e5c]">
      <span className="ml-[5px] text-[14px]">Page 1 of 1</span>
      <div className="ml-auto flex items-center">
        <span className="text-[15px] font-bold w-[9px] leading-none">-</span>
        <div className="relative w-[125px] h-px bg-[#605e5c]">
          <div className="absolute left-[49px] -top-[6px] w-[5px] h-[13px] bg-[#605e5c]" />
          <div className="absolute left-[63px] -top-[3px] w-px h-[7px] bg-[#605e5c]" />
        </div>
        <Plus size={13} strokeWidth={2} className="ml-[5px]" />
        <span className="ml-[15px] text-[13.5px] w-[30px]">82%</span>
        <svg width="20" height="16" viewBox="0 0 20 16" fill="none" className="ml-[23px] mr-[22px]">
          <rect x="0.5" y="0.5" width="19" height="15" stroke="#8a8886" />
          <path d="M3 6 V3 H6 M14 3 H17 V6 M3 10 V13 H6 M14 13 H17 V10" stroke="#605e5c" />
        </svg>
      </div>
    </div>
  );
}

function TaskIcon({ ml, children, dot }: { ml: number; children: ReactNode; dot?: boolean }) {
  return (
    <div style={{ marginLeft: ml }} className="relative shrink-0 flex items-center">
      {children}
      {dot && <div className="absolute left-1/2 -translate-x-1/2 top-[35px] w-[6px] h-[3px] rounded-full bg-[#9a9ca3]" />}
    </div>
  );
}

function Taskbar() {
  return (
    <div className="h-[61px] border-t border-black shrink-0 flex items-center text-white bg-[linear-gradient(90deg,#1b2230_0%,#1b2230_18%,#0f2358_33%,#0f2358_56%,#1b2333_70%,#1a2230_100%)]">
      <div className="w-[584px] shrink-0 flex items-center">
        <div className="relative ml-[26px] w-[28px] h-[28px]">
          <svg width="28" height="28" viewBox="0 0 28 28">
            <defs>
              <linearGradient id="sun" x1="0" y1="0" x2="0" y2="1">
                <stop offset="0" stopColor="#fcc419" />
                <stop offset="1" stopColor="#ef7c10" />
              </linearGradient>
            </defs>
            <circle cx="14" cy="14" r="12.5" fill="url(#sun)" />
            <path d="M5 10 H18 M1 16 H24 M1 21 H18" stroke="#6b6b70" strokeWidth="2.6" strokeLinecap="round" />
          </svg>
          <div className="absolute -top-[7px] left-[12px] w-[20px] h-[20px] rounded-full bg-[#fba0ab] text-[#111] text-[13px] flex items-center justify-center leading-none">6</div>
        </div>
        <div className="ml-[10px] text-[13.5px] leading-[20px]">
          <div>41°C</div>
          <div className="text-[#c8cacf]">Haze</div>
        </div>
      </div>
      <svg width="30" height="30" viewBox="0 0 30 30" className="shrink-0">
        <defs>
          <linearGradient id="win" x1="0" y1="0" x2="1" y2="1">
            <stop offset="0" stopColor="#7fe8fb" />
            <stop offset="1" stopColor="#1490f0" />
          </linearGradient>
        </defs>
        <rect x="0" y="0" width="14.4" height="14.4" rx="1.5" fill="url(#win)" />
        <rect x="15.6" y="0" width="14.4" height="14.4" rx="1.5" fill="url(#win)" />
        <rect x="0" y="15.6" width="14.4" height="14.4" rx="1.5" fill="url(#win)" />
        <rect x="15.6" y="15.6" width="14.4" height="14.4" rx="1.5" fill="url(#win)" />
      </svg>
      <div className="ml-[17px] w-[275px] h-[40px] rounded-full bg-[#3a4470] border border-[#4c5680] flex items-center shrink-0">
        <Search size={22} strokeWidth={2} className="ml-[13px] text-[#d4d6dc] -scale-x-100" />
        <span className="ml-[10px] text-[16px] text-[#d4d6dc]">Search</span>
        <svg width="56" height="34" viewBox="0 0 56 34" className="ml-auto mr-[8px]">
          <circle cx="28" cy="18" r="13" fill="#4a8fd8" />
          <path d="M22 9 C29 6 34 10 33 15 C30 21 27 16 24 20 C20 20 19 13 22 9 Z M30 22 C34 21 36 24 33 29 C31 29 29 26 30 22 Z" fill="#3c8d3e" />
          <path d="M41 32 C40 24 46 20 52 17 C54 24 50 31 41 32 Z M44 14 C44 8 41 4 41 2 C46 4 47 9 44 14 Z" fill="#9ab83c" />
          <path d="M15 32 C16 24 11 21 5 20 C4 26 8 31 15 32 Z" fill="#9ab83c" />
          <circle cx="6" cy="11" r="5" fill="#f5b91f" />
          <circle cx="50" cy="9" r="3.5" fill="#f5b91f" />
        </svg>
      </div>
      <TaskIcon ml={15}>
        <svg width="30" height="30" viewBox="0 0 30 30">
          <rect x="0" y="9" width="22" height="21" fill="#5f5f62" />
          <rect x="7" y="0" width="22" height="21" fill="#f4f4f4" />
          <rect x="7" y="9" width="15" height="12" fill="#b8b8b8" />
        </svg>
      </TaskIcon>
      <TaskIcon ml={25}>
        <CopilotMark size={30} />
      </TaskIcon>
      <TaskIcon ml={26} dot>
        <svg width="30" height="30" viewBox="0 0 30 30">
          <path d="M0 4 Q0 2 2 2 H11 L14 5 H29 Q30 5 30 7 V10 H0 Z" fill="#d99a14" />
          <rect x="0" y="6" width="30" height="23" rx="1.5" fill="#fbd24d" />
          <rect x="8" y="20" width="14" height="9" rx="1.5" fill="#1479c9" />
          <rect x="11" y="23" width="8" height="1.5" fill="#cfe9fb" />
        </svg>
      </TaskIcon>
      <TaskIcon ml={25}>
        <svg width="30" height="30" viewBox="0 0 30 30">
          <defs>
            <linearGradient id="edge" x1="0" y1="0" x2="1" y2="1">
              <stop offset="0" stopColor="#37d4a8" />
              <stop offset="1" stopColor="#1672c8" />
            </linearGradient>
          </defs>
          <circle cx="15" cy="15" r="15" fill="url(#edge)" />
          <path d="M30 17 C29 11 22 8 16 10 C10 12 9 20 14 24 C19 28 26 27 27 25 C21 28 16 24 17 19 C18 15 24 14 30 17 Z" fill="#0c3d78" />
          <path d="M0 14 C2 4 15 -2 25 5 C17 1 6 7 9 20 C10 24 13 27 16 30 C7 30 0 23 0 14 Z" fill="#1e9be0" />
        </svg>
      </TaskIcon>
      <TaskIcon ml={25}>
        <svg width="30" height="30" viewBox="0 0 30 30">
          <path d="M9 6 V1 H21 V6" fill="none" stroke="#1ca7e8" strokeWidth="2" />
          <rect x="1" y="5" width="28" height="25" rx="3" fill="#f4f4f4" />
          <rect x="9" y="11" width="5.5" height="5.5" fill="#f25022" />
          <rect x="15.5" y="11" width="5.5" height="5.5" fill="#7fba00" />
          <rect x="9" y="17.5" width="5.5" height="5.5" fill="#00a4ef" />
          <rect x="15.5" y="17.5" width="5.5" height="5.5" fill="#ffb900" />
        </svg>
      </TaskIcon>
      <TaskIcon ml={25}>
        <svg width="30" height="30" viewBox="0 0 30 30">
          <path d="M15 15 L2 7.5 A15 15 0 0 1 28 7.5 Z" fill="#ea4335" />
          <path d="M15 15 L28 7.5 A15 15 0 0 1 15 30 Z" fill="#fbbc04" />
          <path d="M15 15 L15 30 A15 15 0 0 1 2 7.5 Z" fill="#34a853" />
          <circle cx="15" cy="15" r="7.5" fill="#fff" />
          <circle cx="15" cy="15" r="5.8" fill="#4285f4" />
        </svg>
      </TaskIcon>
      <TaskIcon ml={25} dot>
        <svg width="28" height="30" viewBox="0 0 28 30">
          <rect x="10" y="3" width="17" height="24" fill="#e8f0e8" />
          <path d="M17 3 V27 M22 3 V27 M10 9 H27 M10 15 H27 M10 21 H27" stroke="#1a6b3c" strokeWidth="1" />
          <path d="M0 4 L16 0 V30 L0 26 Z" fill="#1e7145" />
          <text x="8" y="20" textAnchor="middle" fontSize="13" fontWeight="700" fill="#fff" fontFamily="Liberation Sans">X</text>
        </svg>
      </TaskIcon>
      <div className="ml-[17px] relative w-[50px] h-[50px] rounded-[5px] bg-[#2a3a5e] border border-[#34466b] flex items-center justify-center shrink-0">
        <svg width="24" height="30" viewBox="0 0 24 30">
          <rect x="14" y="0" width="10" height="30" rx="1" fill="#e6a117" />
          <rect x="7" y="7" width="10" height="23" rx="1" fill="#f2c43a" />
          <rect x="0" y="15" width="10" height="15" rx="1" fill="#f8dc6a" />
        </svg>
        <div className="absolute left-[14px] bottom-[1px] w-[20px] h-[3px] rounded-full bg-[#60cdff]" />
      </div>
      <ChevronUp size={18} strokeWidth={2.2} className="ml-[238px] text-white shrink-0" />
      <svg width="21" height="18" viewBox="0 0 21 18" className="ml-[19px] shrink-0">
        <path d="M3 12 C0 10 1 5 5 5 C6 1 13 1 14 5 C16 5 17 6 17 8 L14 13 H4 Z" fill="#c9cbd0" />
        <circle cx="15" cy="12" r="6" fill="#4db8f0" />
        <rect x="14.3" y="11" width="1.6" height="4" fill="#10182a" />
        <rect x="14.3" y="8.6" width="1.6" height="1.6" fill="#10182a" />
      </svg>
      <div className="ml-[20px] w-[35px] text-center text-[13.5px] leading-[20px] shrink-0">
        <div>ENG</div>
        <div>IN</div>
      </div>
      <Wifi size={21} strokeWidth={1.8} className="ml-[20px] shrink-0" />
      <Volume2 size={21} strokeWidth={1.6} className="ml-[9px] shrink-0" />
      <svg width="21" height="13" viewBox="0 0 21 13" fill="none" className="ml-[9px] shrink-0">
        <rect x="0.7" y="0.7" width="17.6" height="11.6" rx="2.5" stroke="#fff" strokeWidth="1.3" />
        <rect x="2.5" y="2.5" width="8" height="8" rx="1" fill="#fff" />
        <rect x="19" y="4.5" width="1.5" height="4" fill="#fff" />
      </svg>
      <div className="ml-auto mr-[24px] text-right text-[14.5px] leading-[20px] whitespace-nowrap">
        <div>15:33</div>
        <div>22-04-2025</div>
      </div>
    </div>
  );
}

function Notification() {
  return (
    <div className="h-[40px] pt-[2px] bg-[#f3f2f1] border-b border-[#d2d0ce] flex items-center shrink-0">
      <div className="ml-[18px] w-[20px] h-[20px] rounded-full bg-[#605e5c] flex items-center justify-center">
        <div className="flex flex-col items-center gap-[1.5px]">
          <div className="w-[2px] h-[2px] bg-white" />
          <div className="w-[2px] h-[7px] bg-white" />
        </div>
      </div>
      <span className="ml-[11px] text-[14px] text-[#323130] whitespace-nowrap">Auto recovery contains some recovered files that haven't been opened.</span>
      <div className="ml-auto w-[152px] h-[30px] bg-white rounded-[4px] flex items-center justify-center text-[14px] text-[#252423] whitespace-nowrap">View recovered files</div>
      <X size={24} strokeWidth={1} className="ml-[13px] mr-[9px] text-[#605e5c]" />
    </div>
  );
}

export default function App() {
  return (
    <div className="w-[1920px] h-[1080px] overflow-hidden flex flex-col bg-white font-['Noto_Sans',sans-serif]">
      <TitleBar />
      <Tabs />
      <Ribbon />
      <div className="flex h-[790px] shrink-0">
        <LeftRail />
        <div className="flex-1 flex flex-col min-w-0">
          <Notification />
          <div className="flex flex-1 min-h-0">
            <div className="flex-1 bg-white overflow-hidden">
              <ReportPage />
            </div>
            <FilterPane />
          </div>
          <PageTabs />
        </div>
        <RightRail />
      </div>
      <StatusBar />
      <Taskbar />
    </div>
  );
}
